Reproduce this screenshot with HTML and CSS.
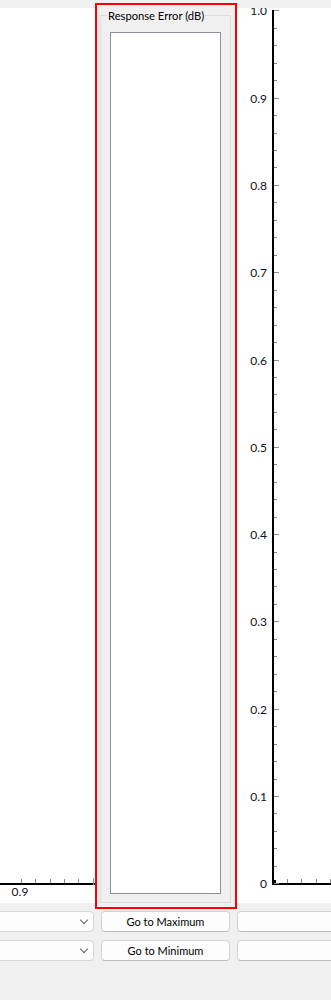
FILE: index.html
```html
<!DOCTYPE html>
<html>
<head>
    <meta charset="UTF-8">
    <title>Response Error</title>
    <link rel="stylesheet" href="styles.css">
</head>
<body>
    <div class="top">
        <div class="plot plot-left">
            <svg width="95" height="895" viewBox="0 0 95 895">
                <line x1="0" y1="876" x2="95" y2="876" class="axis"/>
                <line x1="21.5" y1="871" x2="21.5" y2="875" class="tick"/>
                <line x1="35.5" y1="871" x2="35.5" y2="875" class="tick"/>
                <line x1="50.5" y1="871" x2="50.5" y2="875" class="tick"/>
                <line x1="64.5" y1="871" x2="64.5" y2="875" class="tick"/>
                <line x1="78.5" y1="871" x2="78.5" y2="875" class="tick"/>
                <line x1="93.5" y1="870" x2="93.5" y2="877" class="tick"/>
                <text x="20" y="888" class="label" text-anchor="middle">0.9</text>
            </svg>
        </div>

        <div class="group">
            <div class="group-frame">
                <div class="group-title">Response Error (dB)</div>
                <div class="meter"></div>
            </div>
        </div>

        <div class="plot plot-right">
            <svg width="94" height="895" viewBox="0 0 94 895" id="y-axis">
                <line x1="36" y1="2" x2="36" y2="877" class="axis"/>
                <line x1="35" y1="876" x2="94" y2="876" class="axis"/>
                <line x1="50.5" y1="871" x2="50.5" y2="875" class="tick"/>
                <line x1="64.5" y1="871" x2="64.5" y2="875" class="tick"/>
                <line x1="79.5" y1="871" x2="79.5" y2="875" class="tick"/>
                <line x1="93.5" y1="871" x2="93.5" y2="875" class="tick"/>
                <rect x="36" y="872" width="3" height="3" fill="#000"/>
            </svg>
        </div>
    </div>

    <div class="controls">
        <div class="row">
            <div class="combo"><span class="chevron"></span></div>
            <button class="btn">Go to Maximum</button>
            <button class="btn btn-cut"></button>
        </div>
        <div class="row">
            <div class="combo"><span class="chevron"></span></div>
            <button class="btn">Go to Minimum</button>
            <button class="btn btn-cut"></button>
        </div>
    </div>

    <div class="highlight"></div>

    <script>
        const svg = document.getElementById('y-axis');
        const ns = 'http://www.w3.org/2000/svg';
        const top0 = 2.3;
        const step = 87.3;

        function addLine(x1, y1, x2, y2) {
            const l = document.createElementNS(ns, 'line');
            l.setAttribute('x1', x1);
            l.setAttribute('y1', y1);
            l.setAttribute('x2', x2);
            l.setAttribute('y2', y2);
            l.setAttribute('class', 'tick');
            svg.appendChild(l);
        }

        for (let i = 0; i <= 10; i++) {
            const y = Math.round(top0 + i * step) + 0.5;
            addLine(37, y, 42, y);

            // the top label is clipped by the plot edge, as in the app
            const t = document.createElementNS(ns, 'text');
            t.setAttribute('x', 30);
            t.setAttribute('y', y + 4);
            t.setAttribute('text-anchor', 'end');
            t.setAttribute('class', 'label');
            t.textContent = i === 10 ? '0' : (1 - i / 10).toFixed(1);
            svg.appendChild(t);

            if (i < 10) {
                for (let j = 1; j < 5; j++) {
                    const my = Math.round(top0 + i * step + j * step / 5) + 0.5;
                    addLine(37, my, 40, my);
                }
            }
        }
    </script>
</body>
</html>
```

FILE: styles.css
```css
body {
    margin: 0;
    padding: 0;
    background: #f0f0f0;
    font-family: Lato, 'Liberation Sans', sans-serif;
    font-size: 11px;
    color: #000;
    width: 331px;
    height: 1000px;
    overflow: hidden;
    position: relative;
}

.top {
    display: flex;
    height: 903px;
}

.plot {
    margin-top: 8px;
    height: 895px;
    background: #fff;
    overflow: hidden;
}

.plot svg {
    display: block;
}

.plot-left {
    width: 95px;
}

.plot-right {
    flex: 1;
}

.axis {
    stroke: #000;
    stroke-width: 2;
}

.tick {
    stroke: #8a8a8a;
    stroke-width: 1;
}

.label {
    font-family: Lato, 'Liberation Sans', sans-serif;
    font-size: 12px;
    fill: #101020;
}

.group {
    width: 142px;
    box-sizing: border-box;
    padding: 15px 6px 0 5px;
}

.group-frame {
    position: relative;
    height: 888px;
    box-sizing: border-box;
    border: 1px solid #dcdcdc;
    padding: 16px 9px 8px 9px;
}

.group-title {
    position: absolute;
    top: -8px;
    left: 6px;
    padding: 0 1px;
    background: #f0f0f0;
    font-size: 11.2px;
    line-height: 16px;
    white-space: nowrap;
}

.meter {
    height: 100%;
    box-sizing: border-box;
    background: #fff;
    border: 1px solid #8f8f9d;
}

.controls {
    padding-top: 8px;
    display: flex;
    flex-direction: column;
    gap: 8px;
}

.row {
    display: flex;
    gap: 7px;
    margin-left: -10px;
    height: 21px;
}

.combo {
    position: relative;
    width: 104px;
    flex-shrink: 0;
    box-sizing: border-box;
    background: #fdfdfd;
    border: 1px solid #d6d6d6;
    border-radius: 4px;
}

.chevron {
    position: absolute;
    right: 6px;
    top: 5px;
    width: 5px;
    height: 5px;
    border-right: 1px solid #606060;
    border-bottom: 1px solid #606060;
    transform: rotate(45deg);
}

.btn {
    width: 129px;
    flex-shrink: 0;
    box-sizing: border-box;
    margin: 0;
    padding: 0;
    font-family: inherit;
    font-size: 11px;
    color: #000;
    background: #fdfdfd;
    border: 1px solid #d4d4d4;
    border-bottom-color: #bcbcbc;
    border-radius: 4px;
}

.btn-cut {
    width: 110px;
}

.highlight {
    position: absolute;
    left: 95px;
    top: 3px;
    width: 142px;
    height: 906px;
    box-sizing: border-box;
    border: 2px solid #ff0000;
}
```
